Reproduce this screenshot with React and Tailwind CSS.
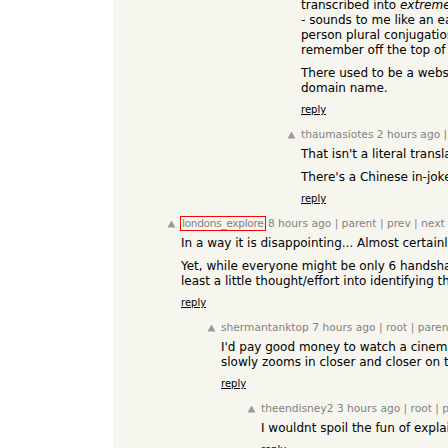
import React from "react";

// Flecha de voto (triángulo gris)
const VoteArrow = () => (
  <svg width="9" height="8" viewBox="0 0 9 8" className="mt-[3px] block">
    <polygon points="4.5,0.5 8.5,7.5 0.5,7.5" fill="#9a9a9a" />
  </svg>
);

const Comment = ({ indent, user, meta, paras, highlight, noHeader, top }) => {
  return (
    <div className={`flex ${indent} ${top || ""}`}>
      <div className="w-[14px] shrink-0">{!noHeader && <VoteArrow />}</div>
      <div className="flex flex-col">
        {!noHeader && (
          <div className="text-[10.67px] leading-[13px] text-[#828282] whitespace-nowrap mb-[6px]">
            {highlight ? (
              <span className="outline outline-1 outline-[#ff0000] outline-offset-[0px] px-[1px] tracking-[-0.35px]">
                {user}
              </span>
            ) : (
              <span>{user}</span>
            )}{" "}
            {meta}
          </div>
        )}
        <div className="flex flex-col gap-[8px] text-[12px] leading-[15px] text-black">
          {paras.map((p, i) => (
            <div key={i} className="whitespace-nowrap">
              {p.map((line, j) => (
                <div key={j}>{line}</div>
              ))}
            </div>
          ))}
        </div>
        <div className="mt-[8px] text-[10px] leading-[12px]">
          <span className="underline text-black">reply</span>
        </div>
      </div>
    </div>
  );
};

export default function App() {
  return (
    <div className="w-[448px] h-[448px] overflow-hidden bg-white font-['DejaVu_Sans',Verdana,sans-serif]">
      <div className="flex w-[1400px] min-h-[448px]">
        <div className="w-[113px] shrink-0 bg-white" />
        <div className="flex-1 bg-[#f6f6ef] flex flex-col gap-[12px]">
          <Comment
            indent="pl-[174px]"
            top="-mt-[2px]"
            noHeader
            paras={[
              [
                <>
                  transcribed into <i>extreme</i> formality, which is how it ends up
                </>,
                "- sounds to me like an early-modern translation of the second",
                "person plural conjugation, but I'm not sure which one, I can't",
                "remember off the top of my head.",
              ],
              [
                "There used to be a website that collected these, with a funny",
                "domain name.",
              ],
            ]}
          />
          <Comment
            indent="pl-[174px]"
            user="thaumasiotes"
            meta="2 hours ago | parent | next [–]"
            paras={[
              ["That isn't a literal translation of the Chinese name."],
              ["There's a Chinese in-joke about this that doesn't really survive translation."],
            ]}
          />
          <Comment
            indent="pl-[54px]"
            user="londons_explore"
            highlight
            meta="8 hours ago | parent | prev | next [–]"
            paras={[
              ["In a way it is disappointing... Almost certainly someone knows who this is."],
              [
                "Yet, while everyone might be only 6 handshakes away, nobody has put at",
                "least a little thought/effort into identifying them and asking.",
              ],
            ]}
          />
          <Comment
            indent="pl-[94px]"
            user="shermantanktop"
            meta="7 hours ago | root | parent | next [–]"
            paras={[
              [
                "I'd pay good money to watch a cinematic documentary in which the camera",
                "slowly zooms in closer and closer on the photo of the mystery man.",
              ],
            ]}
          />
          <Comment
            indent="pl-[134px]"
            user="theendisney2"
            meta="3 hours ago | root | parent | next [–]"
            paras={[["I wouldnt spoil the fun of explaining it to you here."]]}
          />
        </div>
      </div>
    </div>
  );
}
